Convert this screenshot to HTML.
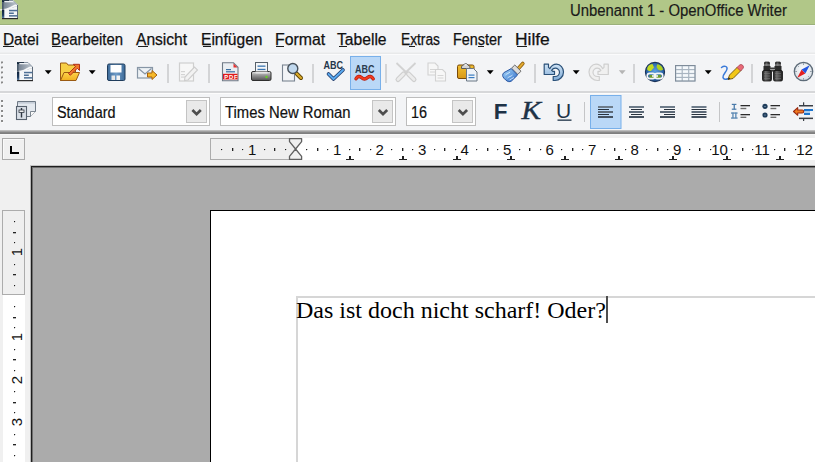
<!DOCTYPE html><html><head><meta charset="utf-8"><style>
*{margin:0;padding:0;box-sizing:border-box}
html,body{width:815px;height:462px;overflow:hidden;background:#f0f0f0;font-family:"Liberation Sans",sans-serif}
.a{position:absolute}
.mi{position:absolute;top:31px;font-size:16px;line-height:18px;color:#111;-webkit-text-stroke:0.25px #111;white-space:pre;transform:scaleX(0.9);transform-origin:0 0}
.ul{position:absolute;top:47px;height:1px;background:#1b1b1b}
.t{position:absolute;font-size:16px;line-height:20px;color:#111;-webkit-text-stroke:0.2px #111;white-space:pre;transform:scaleX(0.9);transform-origin:0 0}
svg{position:absolute;left:0;top:0}
</style></head><body>
<div class="a" style="left:0px;top:0px;width:815px;height:24px;background:#b1c788;"></div>
<div class="a" style="left:0px;top:24px;width:815px;height:1px;background:#9bb07c;"></div>
<div class="a" style="left:0px;top:25px;width:815px;height:1px;background:#fcfcfd;"></div>
<div class="a" style="left:0px;top:26px;width:815px;height:26px;background:#f3f4f6;"></div>
<div class="a" style="left:0px;top:52px;width:815px;height:1px;background:#eeeff0;"></div>
<div class="a" style="left:0px;top:53px;width:815px;height:1px;background:#e8e9ea;"></div>
<div class="a" style="left:0px;top:54px;width:815px;height:1px;background:#fbfbfc;"></div>
<div class="a" style="left:0px;top:55px;width:815px;height:36px;background:#f3f4f6;"></div>
<div class="a" style="left:0px;top:91px;width:815px;height:2px;background:#d6d7d9;"></div>
<div class="a" style="left:0px;top:93px;width:815px;height:1px;background:#fcfcfc;"></div>
<div class="a" style="left:0px;top:94px;width:815px;height:36px;background:#f3f4f6;"></div>
<div class="a" style="left:0px;top:130px;width:815px;height:1px;background:#bdbdbd;"></div>
<div class="a" style="left:0px;top:131px;width:815px;height:1px;background:#a0a0a0;"></div>
<div class="a" style="left:0px;top:132px;width:815px;height:1px;background:#868686;"></div>
<div class="a" style="left:0px;top:133px;width:815px;height:1px;background:#7e7e7e;"></div>
<div class="a" style="left:0px;top:134px;width:815px;height:1px;background:#f7f7f7;"></div>
<div class="a" style="left:0px;top:135px;width:815px;height:31px;background:#f0f0f0;"></div>
<div class="a" style="left:570px;top:2px;font-size:16px;line-height:18px;color:#1a1a1a;-webkit-text-stroke:0.2px #1a1a1a;white-space:pre;transform:scaleX(0.93);transform-origin:0 0">Unbenannt 1 - OpenOffice Writer</div>
<div class="mi" style="left:2.63px;transform:scaleX(0.9610)">Datei</div>
<div class="mi" style="left:51.27px;transform:scaleX(0.9296)">Bearbeiten</div>
<div class="mi" style="left:136.32px;transform:scaleX(0.9743)">Ansicht</div>
<div class="mi" style="left:201.22px;transform:scaleX(0.9733)">Einfügen</div>
<div class="mi" style="left:275.30px;transform:scaleX(0.9900)">Format</div>
<div class="mi" style="left:337.41px;transform:scaleX(0.9777)">Tabelle</div>
<div class="mi" style="left:401.14px;transform:scaleX(0.8597)">Extras</div>
<div class="mi" style="left:453.10px;transform:scaleX(0.8981)">Fenster</div>
<div class="mi" style="left:514.99px;transform:scaleX(1.0869)">Hilfe</div>
<div class="a" style="left:3px;top:46px;width:11px;height:1px;background:#1b1b1b;"></div>
<div class="a" style="left:52px;top:46px;width:9px;height:1px;background:#1b1b1b;"></div>
<div class="a" style="left:138px;top:46px;width:10px;height:1px;background:#1b1b1b;"></div>
<div class="a" style="left:203px;top:46px;width:8px;height:1px;background:#1b1b1b;"></div>
<div class="a" style="left:276px;top:46px;width:8px;height:1px;background:#1b1b1b;"></div>
<div class="a" style="left:339px;top:46px;width:8px;height:1px;background:#1b1b1b;"></div>
<div class="a" style="left:409px;top:46px;width:6px;height:1px;background:#1b1b1b;"></div>
<div class="a" style="left:478px;top:46px;width:6px;height:1px;background:#1b1b1b;"></div>
<div class="a" style="left:517px;top:46px;width:10px;height:1px;background:#1b1b1b;"></div>
<div class="a" style="left:2px;top:138px;width:23px;height:22px;background:#f0f0f0;border:1px solid #ababab;box-shadow:inset 1px 1px 0 #fafafa"></div>
<div class="a" style="left:10px;top:146px;width:2px;height:8px;background:#000;"></div>
<div class="a" style="left:10px;top:152px;width:9px;height:2px;background:#000;"></div>
<div class="a" style="left:210px;top:138px;width:86px;height:22px;background:#efefef;border:1px solid #acacac;border-right:none"></div>
<div class="a" style="left:296px;top:138px;width:519px;height:22px;background:#ffffff;"></div>
<div class="a" style="left:31px;top:166px;width:784px;height:296px;background:#ababab;"></div>
<div class="a" style="left:30px;top:165px;width:785px;height:1px;background:#c4c4c4;"></div>
<div class="a" style="left:30px;top:166px;width:1px;height:296px;background:#b8b8b8;"></div>
<div class="a" style="left:31px;top:166px;width:784px;height:1px;background:#1e1e1e;"></div>
<div class="a" style="left:31px;top:166px;width:1px;height:296px;background:#1e1e1e;"></div>
<div class="a" style="left:32px;top:167px;width:783px;height:1px;background:#6e6e6e;"></div>
<div class="a" style="left:32px;top:167px;width:1px;height:295px;background:#6e6e6e;"></div>
<div class="a" style="left:210px;top:210px;width:605px;height:252px;background:#ffffff;border-top:1px solid #000;border-left:1px solid #000"></div>
<div class="a" style="left:296px;top:296px;width:519px;height:2px;background:#d6d6d6;"></div>
<div class="a" style="left:296px;top:296px;width:2px;height:166px;background:#d6d6d6;"></div>
<div class="a" style="left:2px;top:210px;width:23px;height:85px;background:#efefef;border:1px solid #acacac"></div>
<div class="a" style="left:3px;top:295px;width:22px;height:167px;background:#ffffff;"></div>
<div class="a" style="left:221px;top:149px;width:1px;height:1px;background:#1a1a1a;box-shadow:1px 0 0 #c8c8c8,0 1px 0 #d8d8d8"></div>
<div class="a" style="left:232px;top:148px;width:1px;height:3px;background:#222;box-shadow:1px 0 0 #b0b0b0"></div>
<div class="a" style="left:242px;top:149px;width:1px;height:1px;background:#1a1a1a;box-shadow:1px 0 0 #c8c8c8,0 1px 0 #d8d8d8"></div>
<div class="a" style="left:232.10px;top:141px;width:40px;text-align:center;font-size:15px;line-height:18px;color:#111">1</div>
<div class="a" style="left:264px;top:149px;width:1px;height:1px;background:#1a1a1a;box-shadow:1px 0 0 #c8c8c8,0 1px 0 #d8d8d8"></div>
<div class="a" style="left:274px;top:148px;width:1px;height:3px;background:#222;box-shadow:1px 0 0 #b0b0b0"></div>
<div class="a" style="left:285px;top:149px;width:1px;height:1px;background:#1a1a1a;box-shadow:1px 0 0 #c8c8c8,0 1px 0 #d8d8d8"></div>
<div class="a" style="left:306px;top:149px;width:1px;height:1px;background:#1a1a1a;box-shadow:1px 0 0 #c8c8c8,0 1px 0 #d8d8d8"></div>
<div class="a" style="left:317px;top:148px;width:1px;height:3px;background:#222;box-shadow:1px 0 0 #b0b0b0"></div>
<div class="a" style="left:327px;top:149px;width:1px;height:1px;background:#1a1a1a;box-shadow:1px 0 0 #c8c8c8,0 1px 0 #d8d8d8"></div>
<div class="a" style="left:317.10px;top:141px;width:40px;text-align:center;font-size:15px;line-height:18px;color:#111">1</div>
<div class="a" style="left:349px;top:149px;width:1px;height:1px;background:#1a1a1a;box-shadow:1px 0 0 #c8c8c8,0 1px 0 #d8d8d8"></div>
<div class="a" style="left:359px;top:148px;width:1px;height:3px;background:#222;box-shadow:1px 0 0 #b0b0b0"></div>
<div class="a" style="left:370px;top:149px;width:1px;height:1px;background:#1a1a1a;box-shadow:1px 0 0 #c8c8c8,0 1px 0 #d8d8d8"></div>
<div class="a" style="left:359.60px;top:141px;width:40px;text-align:center;font-size:15px;line-height:18px;color:#111">2</div>
<div class="a" style="left:391px;top:149px;width:1px;height:1px;background:#1a1a1a;box-shadow:1px 0 0 #c8c8c8,0 1px 0 #d8d8d8"></div>
<div class="a" style="left:402px;top:148px;width:1px;height:3px;background:#222;box-shadow:1px 0 0 #b0b0b0"></div>
<div class="a" style="left:412px;top:149px;width:1px;height:1px;background:#1a1a1a;box-shadow:1px 0 0 #c8c8c8,0 1px 0 #d8d8d8"></div>
<div class="a" style="left:402.10px;top:141px;width:40px;text-align:center;font-size:15px;line-height:18px;color:#111">3</div>
<div class="a" style="left:434px;top:149px;width:1px;height:1px;background:#1a1a1a;box-shadow:1px 0 0 #c8c8c8,0 1px 0 #d8d8d8"></div>
<div class="a" style="left:444px;top:148px;width:1px;height:3px;background:#222;box-shadow:1px 0 0 #b0b0b0"></div>
<div class="a" style="left:455px;top:149px;width:1px;height:1px;background:#1a1a1a;box-shadow:1px 0 0 #c8c8c8,0 1px 0 #d8d8d8"></div>
<div class="a" style="left:444.60px;top:141px;width:40px;text-align:center;font-size:15px;line-height:18px;color:#111">4</div>
<div class="a" style="left:476px;top:149px;width:1px;height:1px;background:#1a1a1a;box-shadow:1px 0 0 #c8c8c8,0 1px 0 #d8d8d8"></div>
<div class="a" style="left:487px;top:148px;width:1px;height:3px;background:#222;box-shadow:1px 0 0 #b0b0b0"></div>
<div class="a" style="left:497px;top:149px;width:1px;height:1px;background:#1a1a1a;box-shadow:1px 0 0 #c8c8c8,0 1px 0 #d8d8d8"></div>
<div class="a" style="left:487.10px;top:141px;width:40px;text-align:center;font-size:15px;line-height:18px;color:#111">5</div>
<div class="a" style="left:519px;top:149px;width:1px;height:1px;background:#1a1a1a;box-shadow:1px 0 0 #c8c8c8,0 1px 0 #d8d8d8"></div>
<div class="a" style="left:529px;top:148px;width:1px;height:3px;background:#222;box-shadow:1px 0 0 #b0b0b0"></div>
<div class="a" style="left:540px;top:149px;width:1px;height:1px;background:#1a1a1a;box-shadow:1px 0 0 #c8c8c8,0 1px 0 #d8d8d8"></div>
<div class="a" style="left:529.60px;top:141px;width:40px;text-align:center;font-size:15px;line-height:18px;color:#111">6</div>
<div class="a" style="left:561px;top:149px;width:1px;height:1px;background:#1a1a1a;box-shadow:1px 0 0 #c8c8c8,0 1px 0 #d8d8d8"></div>
<div class="a" style="left:572px;top:148px;width:1px;height:3px;background:#222;box-shadow:1px 0 0 #b0b0b0"></div>
<div class="a" style="left:582px;top:149px;width:1px;height:1px;background:#1a1a1a;box-shadow:1px 0 0 #c8c8c8,0 1px 0 #d8d8d8"></div>
<div class="a" style="left:572.10px;top:141px;width:40px;text-align:center;font-size:15px;line-height:18px;color:#111">7</div>
<div class="a" style="left:604px;top:149px;width:1px;height:1px;background:#1a1a1a;box-shadow:1px 0 0 #c8c8c8,0 1px 0 #d8d8d8"></div>
<div class="a" style="left:614px;top:148px;width:1px;height:3px;background:#222;box-shadow:1px 0 0 #b0b0b0"></div>
<div class="a" style="left:625px;top:149px;width:1px;height:1px;background:#1a1a1a;box-shadow:1px 0 0 #c8c8c8,0 1px 0 #d8d8d8"></div>
<div class="a" style="left:614.60px;top:141px;width:40px;text-align:center;font-size:15px;line-height:18px;color:#111">8</div>
<div class="a" style="left:646px;top:149px;width:1px;height:1px;background:#1a1a1a;box-shadow:1px 0 0 #c8c8c8,0 1px 0 #d8d8d8"></div>
<div class="a" style="left:657px;top:148px;width:1px;height:3px;background:#222;box-shadow:1px 0 0 #b0b0b0"></div>
<div class="a" style="left:667px;top:149px;width:1px;height:1px;background:#1a1a1a;box-shadow:1px 0 0 #c8c8c8,0 1px 0 #d8d8d8"></div>
<div class="a" style="left:657.10px;top:141px;width:40px;text-align:center;font-size:15px;line-height:18px;color:#111">9</div>
<div class="a" style="left:689px;top:149px;width:1px;height:1px;background:#1a1a1a;box-shadow:1px 0 0 #c8c8c8,0 1px 0 #d8d8d8"></div>
<div class="a" style="left:699px;top:148px;width:1px;height:3px;background:#222;box-shadow:1px 0 0 #b0b0b0"></div>
<div class="a" style="left:710px;top:149px;width:1px;height:1px;background:#1a1a1a;box-shadow:1px 0 0 #c8c8c8,0 1px 0 #d8d8d8"></div>
<div class="a" style="left:699.60px;top:141px;width:40px;text-align:center;font-size:15px;line-height:18px;color:#111">10</div>
<div class="a" style="left:731px;top:149px;width:1px;height:1px;background:#1a1a1a;box-shadow:1px 0 0 #c8c8c8,0 1px 0 #d8d8d8"></div>
<div class="a" style="left:742px;top:148px;width:1px;height:3px;background:#222;box-shadow:1px 0 0 #b0b0b0"></div>
<div class="a" style="left:752px;top:149px;width:1px;height:1px;background:#1a1a1a;box-shadow:1px 0 0 #c8c8c8,0 1px 0 #d8d8d8"></div>
<div class="a" style="left:742.10px;top:141px;width:40px;text-align:center;font-size:15px;line-height:18px;color:#111">11</div>
<div class="a" style="left:774px;top:149px;width:1px;height:1px;background:#1a1a1a;box-shadow:1px 0 0 #c8c8c8,0 1px 0 #d8d8d8"></div>
<div class="a" style="left:784px;top:148px;width:1px;height:3px;background:#222;box-shadow:1px 0 0 #b0b0b0"></div>
<div class="a" style="left:795px;top:149px;width:1px;height:1px;background:#1a1a1a;box-shadow:1px 0 0 #c8c8c8,0 1px 0 #d8d8d8"></div>
<div class="a" style="left:784.60px;top:141px;width:40px;text-align:center;font-size:15px;line-height:18px;color:#111">12</div>
<div class="a" style="left:349px;top:156px;width:2px;height:4px;background:#222;"></div>
<div class="a" style="left:346px;top:159px;width:8px;height:1px;background:#222;"></div>
<div class="a" style="left:402px;top:156px;width:2px;height:4px;background:#222;"></div>
<div class="a" style="left:399px;top:159px;width:8px;height:1px;background:#222;"></div>
<div class="a" style="left:456px;top:156px;width:2px;height:4px;background:#222;"></div>
<div class="a" style="left:453px;top:159px;width:8px;height:1px;background:#222;"></div>
<div class="a" style="left:510px;top:156px;width:2px;height:4px;background:#222;"></div>
<div class="a" style="left:507px;top:159px;width:8px;height:1px;background:#222;"></div>
<div class="a" style="left:564px;top:156px;width:2px;height:4px;background:#222;"></div>
<div class="a" style="left:561px;top:159px;width:8px;height:1px;background:#222;"></div>
<div class="a" style="left:618px;top:156px;width:2px;height:4px;background:#222;"></div>
<div class="a" style="left:615px;top:159px;width:8px;height:1px;background:#222;"></div>
<div class="a" style="left:672px;top:156px;width:2px;height:4px;background:#222;"></div>
<div class="a" style="left:669px;top:159px;width:8px;height:1px;background:#222;"></div>
<div class="a" style="left:726px;top:156px;width:2px;height:4px;background:#222;"></div>
<div class="a" style="left:723px;top:159px;width:8px;height:1px;background:#222;"></div>
<div class="a" style="left:779px;top:156px;width:2px;height:4px;background:#222;"></div>
<div class="a" style="left:776px;top:159px;width:8px;height:1px;background:#222;"></div>
<div class="a" style="left:14px;top:221px;width:1px;height:1px;background:#1a1a1a;box-shadow:0 1px 0 #c8c8c8,1px 0 0 #d8d8d8"></div>
<div class="a" style="left:13px;top:232px;width:3px;height:1px;background:#222;box-shadow:0 1px 0 #b0b0b0"></div>
<div class="a" style="left:14px;top:242px;width:1px;height:1px;background:#1a1a1a;box-shadow:0 1px 0 #c8c8c8,1px 0 0 #d8d8d8"></div>
<div class="a" style="left:-3px;top:243.10px;width:40px;height:18px;text-align:center;font-size:15px;line-height:18px;color:#111;transform:rotate(-90deg)">1</div>
<div class="a" style="left:14px;top:264px;width:1px;height:1px;background:#1a1a1a;box-shadow:0 1px 0 #c8c8c8,1px 0 0 #d8d8d8"></div>
<div class="a" style="left:13px;top:274px;width:3px;height:1px;background:#222;box-shadow:0 1px 0 #b0b0b0"></div>
<div class="a" style="left:14px;top:285px;width:1px;height:1px;background:#1a1a1a;box-shadow:0 1px 0 #c8c8c8,1px 0 0 #d8d8d8"></div>
<div class="a" style="left:14px;top:306px;width:1px;height:1px;background:#1a1a1a;box-shadow:0 1px 0 #c8c8c8,1px 0 0 #d8d8d8"></div>
<div class="a" style="left:13px;top:317px;width:3px;height:1px;background:#222;box-shadow:0 1px 0 #b0b0b0"></div>
<div class="a" style="left:14px;top:327px;width:1px;height:1px;background:#1a1a1a;box-shadow:0 1px 0 #c8c8c8,1px 0 0 #d8d8d8"></div>
<div class="a" style="left:-3px;top:328.10px;width:40px;height:18px;text-align:center;font-size:15px;line-height:18px;color:#111;transform:rotate(-90deg)">1</div>
<div class="a" style="left:14px;top:349px;width:1px;height:1px;background:#1a1a1a;box-shadow:0 1px 0 #c8c8c8,1px 0 0 #d8d8d8"></div>
<div class="a" style="left:13px;top:359px;width:3px;height:1px;background:#222;box-shadow:0 1px 0 #b0b0b0"></div>
<div class="a" style="left:14px;top:370px;width:1px;height:1px;background:#1a1a1a;box-shadow:0 1px 0 #c8c8c8,1px 0 0 #d8d8d8"></div>
<div class="a" style="left:-3px;top:370.60px;width:40px;height:18px;text-align:center;font-size:15px;line-height:18px;color:#111;transform:rotate(-90deg)">2</div>
<div class="a" style="left:14px;top:391px;width:1px;height:1px;background:#1a1a1a;box-shadow:0 1px 0 #c8c8c8,1px 0 0 #d8d8d8"></div>
<div class="a" style="left:13px;top:402px;width:3px;height:1px;background:#222;box-shadow:0 1px 0 #b0b0b0"></div>
<div class="a" style="left:14px;top:412px;width:1px;height:1px;background:#1a1a1a;box-shadow:0 1px 0 #c8c8c8,1px 0 0 #d8d8d8"></div>
<div class="a" style="left:-3px;top:413.10px;width:40px;height:18px;text-align:center;font-size:15px;line-height:18px;color:#111;transform:rotate(-90deg)">3</div>
<div class="a" style="left:14px;top:434px;width:1px;height:1px;background:#1a1a1a;box-shadow:0 1px 0 #c8c8c8,1px 0 0 #d8d8d8"></div>
<div class="a" style="left:13px;top:444px;width:3px;height:1px;background:#222;box-shadow:0 1px 0 #b0b0b0"></div>
<div class="a" style="left:14px;top:455px;width:1px;height:1px;background:#1a1a1a;box-shadow:0 1px 0 #c8c8c8,1px 0 0 #d8d8d8"></div>
<div class="a" style="left:296px;top:297px;font-family:'Liberation Serif',serif;font-size:24px;line-height:26px;color:#000;white-space:pre">Das ist doch nicht scharf! Oder?</div>
<div class="a" style="left:606px;top:296px;width:2px;height:27px;background:#4e4e4e;"></div>
<div class="a" style="left:52px;top:97px;width:158px;height:29px;background:#ffffff;border:1px solid #bdbdbd"></div>
<div class="a" style="left:186px;top:100px;width:21px;height:23px;background:#e9e9e9;border:1px solid #c4c4c4"></div>
<div class="t" style="left:57px;top:103px">Standard</div>
<div class="a" style="left:220px;top:97px;width:176px;height:29px;background:#ffffff;border:1px solid #bdbdbd"></div>
<div class="a" style="left:372px;top:100px;width:21px;height:23px;background:#e9e9e9;border:1px solid #c4c4c4"></div>
<div class="t" style="left:225px;top:103px"><span style="display:inline-block;transform:scaleX(1.03);transform-origin:0 0">Times New Roman</span></div>
<div class="a" style="left:406px;top:97px;width:70px;height:29px;background:#ffffff;border:1px solid #bdbdbd"></div>
<div class="a" style="left:452px;top:100px;width:21px;height:23px;background:#e9e9e9;border:1px solid #c4c4c4"></div>
<div class="t" style="left:411px;top:103px">16</div>
<svg width="815" height="462" viewBox="0 0 815 462">
<defs>
<linearGradient id="gpage" x1="0" y1="0" x2="1" y2="1"><stop offset="0" stop-color="#ffffff"/><stop offset="1" stop-color="#dfe4ea"/></linearGradient>
<linearGradient id="gfold" x1="0" y1="0" x2="0" y2="1"><stop offset="0" stop-color="#ffd24a"/><stop offset="1" stop-color="#f0b020"/></linearGradient>
<linearGradient id="gsave" x1="0" y1="0" x2="1" y2="0"><stop offset="0" stop-color="#3c6a98"/><stop offset="0.5" stop-color="#6f9cc8"/><stop offset="1" stop-color="#3c6a98"/></linearGradient>
<linearGradient id="gprint" x1="0" y1="0" x2="0" y2="1"><stop offset="0" stop-color="#e8e8e8"/><stop offset="0.35" stop-color="#a0a0a0"/><stop offset="1" stop-color="#505050"/></linearGradient>
<linearGradient id="gblue" x1="0" y1="0" x2="0" y2="1"><stop offset="0" stop-color="#cfe3f5"/><stop offset="1" stop-color="#7eaad6"/></linearGradient>
<radialGradient id="gglobe" cx="0.4" cy="0.35" r="0.7"><stop offset="0" stop-color="#7fc0ff"/><stop offset="1" stop-color="#1c4e8c"/></radialGradient>
<linearGradient id="gbin" x1="0" y1="0" x2="0" y2="1"><stop offset="0" stop-color="#606060"/><stop offset="1" stop-color="#1a1a1a"/></linearGradient>
<g id="writer">
 <linearGradient id="gwtop" x1="0" y1="0" x2="1" y2="0"><stop offset="0" stop-color="#6f7c8c"/><stop offset="1" stop-color="#c4ccd4"/></linearGradient>
 <linearGradient id="gwleft" x1="0" y1="0" x2="0" y2="1"><stop offset="0" stop-color="#0e2038"/><stop offset="0.6" stop-color="#1e3c60"/><stop offset="1" stop-color="#6a90b8"/></linearGradient>
 <path d="M0 0 H11 L16 5 V19 H0 Z" fill="#f4f6f8"/>
 <path d="M0 2.2 H12.6 L16 5.6 V6.2 C12.5 6.5 9.5 8 6.5 9.3 C4 10 2 9.8 0 9.8 Z" fill="url(#gwtop)"/>
 <path d="M1 0.8 H11" stroke="#e8ecf0" stroke-width="1.4"/>
 <path d="M-3 9.3 C2 9 6 8.6 9.5 6.3 C11.5 5 13.5 4.6 16 4.6 V5.9 C13.5 6 11.5 6.8 9.5 8.2 C6 10.4 2 10.5 -3 10.6 Z" fill="#ffffff" opacity="0.9"/>
 <rect x="0" y="9.5" width="2.3" height="9.5" fill="url(#gwleft)"/>
 <rect x="0" y="0" width="2.3" height="2.5" fill="#14283f"/>
 <rect x="0" y="2.5" width="1.6" height="7" fill="#4a5a6c"/>
 <path d="M0.5 0.5 H7" stroke="#2a3a4c" stroke-width="1"/>
 <path d="M7 0.5 H11 L15.5 5" fill="none" stroke="#8a96a4" stroke-width="1"/>
 <path d="M15.5 5 V18.5" stroke="#5e6a78" stroke-width="1"/>
 <rect x="7" y="9.8" width="8.5" height="1.5" fill="#4e6f94"/>
 <rect x="7" y="12.5" width="4.8" height="1.5" fill="#4e6f94"/>
 <rect x="7" y="15.1" width="8.5" height="1.5" fill="#4e6f94"/>
 <rect x="0" y="18" width="16" height="1.2" fill="#2a2a2a"/>
</g>
</defs>
<use href="#writer" transform="translate(2,0)"/>
<use href="#writer" transform="translate(17,62)"/>
<path d="M44.8 70.2 h6.8 l-3.4 4.1 z" fill="#000"/>
<path d="M88.8 70.2 h6.8 l-3.4 4.1 z" fill="#000"/>
<path d="M486.8 70.2 h6.8 l-3.4 4.1 z" fill="#000"/>
<path d="M572.8 70.2 h6.8 l-3.4 4.1 z" fill="#000"/>
<path d="M704.8 70.2 h6.8 l-3.4 4.1 z" fill="#000"/>
<path d="M618.8 70.2 h6.8 l-3.4 4.1 z" fill="#b5b5b5"/>
<rect x="167" y="64" width="2" height="19" fill="#d3d4d6"/>
<rect x="208" y="64" width="2" height="19" fill="#d3d4d6"/>
<rect x="312" y="64" width="2" height="19" fill="#d3d4d6"/>
<rect x="385" y="64" width="2" height="19" fill="#d3d4d6"/>
<rect x="534" y="64" width="2" height="19" fill="#d3d4d6"/>
<rect x="633" y="64" width="2" height="19" fill="#d3d4d6"/>
<rect x="751" y="64" width="2" height="19" fill="#d3d4d6"/>
<rect x="584" y="102" width="1" height="20" fill="#c4c5c7"/>
<rect x="719" y="102" width="1" height="20" fill="#c4c5c7"/>
<rect x="1" y="61.5" width="2" height="2" fill="#8a8a8a"/><rect x="2" y="63.5" width="1.5" height="0.8" fill="#ffffff"/>
<rect x="1" y="66.5" width="2" height="2" fill="#8a8a8a"/><rect x="2" y="68.5" width="1.5" height="0.8" fill="#ffffff"/>
<rect x="1" y="71.5" width="2" height="2" fill="#8a8a8a"/><rect x="2" y="73.5" width="1.5" height="0.8" fill="#ffffff"/>
<rect x="1" y="76.5" width="2" height="2" fill="#8a8a8a"/><rect x="2" y="78.5" width="1.5" height="0.8" fill="#ffffff"/>
<rect x="1" y="81.5" width="2" height="2" fill="#8a8a8a"/><rect x="2" y="83.5" width="1.5" height="0.8" fill="#ffffff"/>
<rect x="1" y="100" width="2" height="2" fill="#8a8a8a"/><rect x="2" y="102" width="1.5" height="0.8" fill="#ffffff"/>
<rect x="1" y="105" width="2" height="2" fill="#8a8a8a"/><rect x="2" y="107" width="1.5" height="0.8" fill="#ffffff"/>
<rect x="1" y="110" width="2" height="2" fill="#8a8a8a"/><rect x="2" y="112" width="1.5" height="0.8" fill="#ffffff"/>
<rect x="1" y="115" width="2" height="2" fill="#8a8a8a"/><rect x="2" y="117" width="1.5" height="0.8" fill="#ffffff"/>
<rect x="1" y="120" width="2" height="2" fill="#8a8a8a"/><rect x="2" y="122" width="1.5" height="0.8" fill="#ffffff"/>
<g>
<path d="M60.5 63 h6 l1.5 2 h7.5 v15.5 h-15 z" fill="#f7cf45" stroke="#9a5a12" stroke-width="1"/>
<path d="M64 72.5 h15.5 l-3.5 8 h-15.5 z" fill="url(#gfold)" stroke="#9a5a12" stroke-width="1"/>
<path d="M68.5 73.5 l7 -7 l-2.2 -2.2 h6.2 v6.2 l-2.2 -2.2 l-7 7 z" fill="#f0782a" stroke="#b0301a" stroke-width="1" stroke-linejoin="round"/>
</g>
<g>
<rect x="107.5" y="64" width="17.5" height="16.5" rx="1.5" fill="url(#gsave)" stroke="#1f3c5c" stroke-width="1"/>
<rect x="110.5" y="65" width="11" height="7.5" fill="#ffffff"/>
<rect x="111.5" y="75.5" width="3.5" height="4.5" fill="#e8e8e8"/>
<rect x="116.5" y="75.5" width="3.5" height="4.5" fill="#f4f4f4"/>
</g>
<g>
<rect x="137.5" y="67.5" width="15" height="10.5" fill="#eef2f6" stroke="#8796a6" stroke-width="1.2"/>
<path d="M138.5 68.5 L145 74 L151.5 68.5" fill="none" stroke="#8796a6" stroke-width="1.2"/>
<path d="M147.5 73 h4.5 v-2.5 l5 4.5 l-5 4.5 v-2.5 h-4.5 z" fill="#f7b928" stroke="#a5600e" stroke-width="1"/>
</g>
<g opacity="1">
<rect x="179.5" y="63" width="14" height="18" fill="#f7f7f7" stroke="#cfcfcf" stroke-width="1.2"/>
<rect x="181" y="71" width="4" height="1.2" fill="#d4d4d4"/><rect x="181" y="74" width="4" height="1.2" fill="#d4d4d4"/><rect x="181" y="76.5" width="4" height="1.2" fill="#d4d4d4"/>
<path d="M185 77 l9.5 -10 l3 3 l-9.5 10 l-3.5 0.5 z" fill="#f2f2f2" stroke="#cdcdcd" stroke-width="1.1"/>
</g>
<g>
<path d="M222.5 62.8 h11 l4.5 4.5 v13.5 h-15.5 z" fill="#eaeef2" stroke="#6f7a86" stroke-width="1.1"/>
<path d="M233.5 63.5 l4 4 h-4 z" fill="#e83030"/>
<rect x="226" y="69" width="5" height="1.2" fill="#3b6ea0"/>
<rect x="226" y="71.2" width="9" height="1.2" fill="#3b6ea0"/>
<rect x="223" y="73.8" width="14.5" height="5.6" fill="#e01818"/>
<text x="224.2" y="78.6" font-family="Liberation Sans" font-weight="bold" font-size="5.8" fill="#fff" letter-spacing="0.9">PDF</text>
</g>
<g>
<rect x="255.5" y="62.5" width="12" height="11" fill="#f4f6f8" stroke="#56606a" stroke-width="1"/>
<rect x="257.5" y="65.5" width="8" height="1.3" fill="#3a74b0"/>
<rect x="257.5" y="68.8" width="8" height="1.3" fill="#3a74b0"/>
<rect x="251.5" y="71.5" width="19.5" height="9" rx="1.5" fill="url(#gprint)" stroke="#2e2e2e" stroke-width="1"/>
<rect x="255.5" y="71.5" width="12" height="2" fill="#e4e4e4"/>
<circle cx="266.5" cy="77" r="1.2" fill="#64d020"/>
</g>
<g>
<rect x="282.5" y="65" width="12" height="16" fill="#f2f4f7" stroke="#7a8592" stroke-width="1.1"/>
<path d="M296.5 73.5 l4.5 4.5" stroke="#5a4000" stroke-width="4" stroke-linecap="round"/>
<path d="M296.5 73.5 l4.5 4.5" stroke="#d8a828" stroke-width="2.4" stroke-linecap="round"/>
<circle cx="292.8" cy="68.5" r="5" fill="#c0d8ee" stroke="#46505a" stroke-width="1.4"/>
</g>
<g>
<text x="323.5" y="69.4" font-family="Liberation Sans" font-weight="bold" font-size="10.2" fill="#24364a" textLength="19.5" lengthAdjust="spacingAndGlyphs">ABC</text>
<path d="M328.5 74 l5 5 l9.5 -9" fill="none" stroke="#1e3a6a" stroke-width="3.6" stroke-linejoin="round" stroke-linecap="round"/>
<path d="M328.5 74 l5 5 l9.5 -9" fill="none" stroke="#5aaaf0" stroke-width="2" stroke-linejoin="round" stroke-linecap="round"/>
</g>
<g>
<rect x="350.5" y="56.5" width="30" height="33" fill="#bad8f7" stroke="#78b0ea" stroke-width="1"/>
<text x="355" y="72.6" font-family="Liberation Sans" font-weight="bold" font-size="10" fill="#2a3c50" textLength="19.5" lengthAdjust="spacingAndGlyphs">ABC</text>
<path d="M356 78.8 C357.5 76 359.5 76 361.5 77.5 C363.5 79.5 365.5 79.5 367.5 77.5 C369.5 76 371.5 76 373.2 78.8" fill="none" stroke="#b81808" stroke-width="3.4" stroke-linecap="round"/><path d="M356 78.8 C357.5 76 359.5 76 361.5 77.5 C363.5 79.5 365.5 79.5 367.5 77.5 C369.5 76 371.5 76 373.2 78.8" fill="none" stroke="#f03a20" stroke-width="2" stroke-linecap="round"/>
</g>
<g>
<path d="M396.5 63 L409.5 75.5" stroke="#d2d2d2" stroke-width="1.8"/>
<path d="M415.5 63 L402.5 75.5" stroke="#d2d2d2" stroke-width="1.8"/>
<path d="M403.5 74 L398 79.5" stroke="#cfcfcf" stroke-width="5" stroke-linecap="round"/>
<path d="M403.5 74 L398 79.5" stroke="#ececec" stroke-width="2.6" stroke-linecap="round"/>
<path d="M408.5 74 L414 79.5" stroke="#cfcfcf" stroke-width="5" stroke-linecap="round"/>
<path d="M408.5 74 L414 79.5" stroke="#ececec" stroke-width="2.6" stroke-linecap="round"/>
</g>
<g>
<path d="M428 63 h7 l3 3 v9 h-10 z" fill="#f7f7f7" stroke="#d2d2d2" stroke-width="1.1"/>
<rect x="430" y="69" width="5" height="1" fill="#d6d6d6"/><rect x="430" y="71.5" width="5" height="1" fill="#d6d6d6"/>
<path d="M435.5 69.5 h7 l3 3 v8.5 h-10 z" fill="#f7f7f7" stroke="#d2d2d2" stroke-width="1.1"/>
<rect x="437.5" y="75" width="6" height="1" fill="#d6d6d6"/><rect x="437.5" y="77.5" width="6" height="1" fill="#d6d6d6"/>
</g>
<g>
<linearGradient id="gclip" x1="0" y1="0" x2="0" y2="1"><stop offset="0" stop-color="#f2c030"/><stop offset="1" stop-color="#d89818"/></linearGradient><rect x="457.5" y="65" width="16.5" height="13.5" rx="1.5" fill="url(#gclip)" stroke="#7a4a08" stroke-width="1"/>
<path d="M461.5 68.5 v-2.2 l2 -1.2 a2.4 2.4 0 0 1 4.4 0 l2 1.2 v2.2 z" fill="#d4d4d4" stroke="#5a5a5a" stroke-width="1"/><rect x="464.6" y="64.2" width="2.2" height="1.2" fill="#f4f4f4"/>
<path d="M466.5 68.5 h7 l3.5 3.5 v9 h-10.5 z" fill="#eef3f8" stroke="#6a7684" stroke-width="1"/>
<rect x="468.5" y="74.5" width="6" height="1.2" fill="#3a7cc0"/><rect x="468.5" y="77" width="6" height="1.2" fill="#3a7cc0"/>
</g>
<g>
<linearGradient id="gbrush" x1="0" y1="0" x2="1" y2="1"><stop offset="0" stop-color="#a6d8fa"/><stop offset="1" stop-color="#2f6cc8"/></linearGradient>
<path d="M517 70 L522.8 63.5" stroke="#8a5c0a" stroke-width="3.6" stroke-linecap="round"/>
<path d="M517 70 L522.8 63.5" stroke="#e2aa32" stroke-width="2" stroke-linecap="round"/>
<path d="M511.5 68.2 L514.8 65 L521 71.2 L517.8 74.4 Z" fill="#dcdcdc" stroke="#5a5a5a" stroke-width="0.9"/>
<path d="M511.2 68.6 L517.6 75 L511.5 81 C509.8 82.2 507.5 81.8 505.6 79.9 L503.9 78.2 C502.2 76.4 502.3 74.2 503.8 72.7 Z" fill="url(#gbrush)" stroke="#2a56a2" stroke-width="1"/>
<path d="M505.5 75 C507 73.5 508.5 73.5 510 72 M507.5 78 C509 76.5 511 76.5 512.5 75 M509.5 80 C511 78.8 512.5 78.5 514 77.5" stroke="#e8f6ff" stroke-width="0.8" fill="none"/>
</g>
<path transform="translate(542,62)" d="M2.2 2.2 H6.5 V5.3 L7.8 6.6 C9.5 3.5 12 2.2 14.5 2.2 C18.5 2.2 21.5 5.8 21.5 10 C21.5 14.8 17.5 18.5 13 18.5 H11.2 V14.5 H13 C15.5 14.5 17.5 12.5 17.5 10.2 C17.5 8 15.5 6.2 13.3 6.2 C11.8 6.2 10.5 7 9.6 8.4 L10.7 9.3 H12.5 V12.5 H2.2 Z" fill="url(#gblue)" stroke="#2a5078" stroke-width="1.2" stroke-linejoin="round"/>
<path transform="translate(610.5,62) scale(-1,1)" d="M2.2 2.2 H6.5 V5.3 L7.8 6.6 C9.5 3.5 12 2.2 14.5 2.2 C18.5 2.2 21.5 5.8 21.5 10 C21.5 14.8 17.5 18.5 13 18.5 H11.2 V14.5 H13 C15.5 14.5 17.5 12.5 17.5 10.2 C17.5 8 15.5 6.2 13.3 6.2 C11.8 6.2 10.5 7 9.6 8.4 L10.7 9.3 H12.5 V12.5 H2.2 Z" fill="#f0f0f0" stroke="#cfcfcf" stroke-width="1.2" stroke-linejoin="round"/>
<g>
<radialGradient id="gglobe2" cx="0.5" cy="0.45" r="0.6"><stop offset="0" stop-color="#5aa0e0"/><stop offset="0.7" stop-color="#2a64a8"/><stop offset="1" stop-color="#1a3e70"/></radialGradient>
<circle cx="655" cy="72" r="9.6" fill="url(#gglobe2)" stroke="#1c3458" stroke-width="1.1"/>
<path d="M647.2 69.5 C647 66.5 649.5 64.2 652.5 64 L654 67.5 L651 71 C649.5 71.2 648 70.8 647.2 69.5 Z" fill="#c4dc20"/>
<path d="M657.2 64.2 C660 64.5 662.8 66.8 663 69.8 C661.5 70.8 659.5 70.8 658 69.5 L656.5 67 Z" fill="#b0d020"/>
<path d="M649 75.5 C651 74.5 653 74.5 654.5 75.5 L654 78.5 C652 79.5 650 79 649 75.5 Z M656 75.5 C658 74.5 660 74.5 661.5 75.5 C660.5 78.5 658.5 79.5 656 78.5 Z" fill="#6a9a2a"/>
<rect x="647.2" y="73.4" width="8" height="5.2" rx="2.6" fill="none" stroke="#f4f6f4" stroke-width="1.6"/>
<rect x="654.8" y="73.4" width="8" height="5.2" rx="2.6" fill="none" stroke="#f4f6f4" stroke-width="1.6"/>
<rect x="652" y="75.2" width="6" height="1.6" fill="#f4f6f4"/>
</g>
<g>
<rect x="675" y="65" width="20.5" height="16.5" fill="#a9b5c1"/>
<rect x="676.3" y="66.3" width="5.3" height="2.7" fill="#f6f9fc"/>
<rect x="682.8" y="66.3" width="5.3" height="2.7" fill="#f6f9fc"/>
<rect x="689.3" y="66.3" width="5.3" height="2.7" fill="#f6f9fc"/>
<rect x="676.3" y="70.2" width="5.3" height="2.7" fill="#f6f9fc"/>
<rect x="682.8" y="70.2" width="5.3" height="2.7" fill="#f6f9fc"/>
<rect x="689.3" y="70.2" width="5.3" height="2.7" fill="#f6f9fc"/>
<rect x="676.3" y="74.1" width="5.3" height="2.7" fill="#f6f9fc"/>
<rect x="682.8" y="74.1" width="5.3" height="2.7" fill="#f6f9fc"/>
<rect x="689.3" y="74.1" width="5.3" height="2.7" fill="#f6f9fc"/>
<rect x="676.3" y="78.0" width="5.3" height="2.7" fill="#f6f9fc"/>
<rect x="682.8" y="78.0" width="5.3" height="2.7" fill="#f6f9fc"/>
<rect x="689.3" y="78.0" width="5.3" height="2.7" fill="#f6f9fc"/>
<rect x="675.5" y="65.5" width="19.5" height="15.5" fill="none" stroke="#7f8c9a" stroke-width="1"/>
</g>
<g>
<path d="M721.5 67.5 c2.5 -2 6 -1.5 5.5 1.5 c-0.5 3 -4.5 5.5 -4 8.5 c0.5 2 3 2 5 1.2" fill="none" stroke="#3a7ad8" stroke-width="1.5" stroke-linecap="round"/>
<path d="M728 79.5 l1.5 -4.5 l8 -8 l3.5 3.5 l-8 8 z" fill="#f2c818" stroke="#6a5010" stroke-width="0.9" stroke-linejoin="round"/>
<path d="M737 67.5 l2.2 -2.2 c1 -1 2.5 -1 3.5 0 c1 1 1 2.5 0 3.5 l-2.2 2.2 z" fill="#e86a78" stroke="#a84050" stroke-width="0.8"/>
<path d="M728 79.5 l0.8 -2.3 l1.5 1.5 z" fill="#202020"/>
</g>
<g>
<linearGradient id="gbin2" x1="0" y1="0" x2="1" y2="0"><stop offset="0" stop-color="#1c1c1c"/><stop offset="0.35" stop-color="#6a6a6a"/><stop offset="1" stop-color="#1c1c1c"/></linearGradient>
<rect x="764.5" y="62" width="5" height="4.5" rx="0.8" fill="url(#gbin2)" stroke="#151515" stroke-width="0.7"/>
<rect x="775.5" y="62" width="5" height="4.5" rx="0.8" fill="url(#gbin2)" stroke="#151515" stroke-width="0.7"/>
<rect x="764" y="64.5" width="6" height="1" fill="#9a9a9a"/><rect x="775" y="64.5" width="6" height="1" fill="#9a9a9a"/>
<rect x="763.5" y="66" width="7" height="5" fill="#2a2a2a"/><rect x="774.5" y="66" width="7" height="5" fill="#2a2a2a"/>
<rect x="769.5" y="67.5" width="6" height="1.6" fill="#3a3a3a"/><rect x="769.5" y="70" width="6" height="1.6" fill="#3a3a3a"/>
<rect x="770" y="69.1" width="5" height="0.9" fill="#9a9a9a"/>
<rect x="762.5" y="70.5" width="9" height="10.5" rx="1.5" fill="url(#gbin2)" stroke="#111" stroke-width="0.8"/>
<rect x="773.5" y="70.5" width="9" height="10.5" rx="1.5" fill="url(#gbin2)" stroke="#111" stroke-width="0.8"/>
<path d="M764 73.5 h6 M764 76 h6 M764 78.5 h6 M775 73.5 h6 M775 76 h6 M775 78.5 h6" stroke="#808080" stroke-width="0.5"/>
</g>
<g>
<radialGradient id="gnav" cx="0.5" cy="0.4" r="0.6"><stop offset="0" stop-color="#ffffff"/><stop offset="1" stop-color="#d6dde4"/></radialGradient>
<circle cx="803.5" cy="71.5" r="9.2" fill="url(#gnav)" stroke="#5d6b78" stroke-width="1.3"/>
<g stroke="#8a96a2" stroke-width="0.9">
<path d="M803.5 63.2 v1.8 M803.5 78 v1.8 M795.2 71.5 h1.8 M810 71.5 h1.8 M797.6 65.6 l1.2 1.2 M808.2 76.2 l1.2 1.2 M809.4 65.6 l-1.2 1.2 M798.8 76.2 l-1.2 1.2"/>
</g>
<path d="M797.3 77.7 L801.6 69.6 L805.4 73.4 Z" fill="#e42020"/>
<path d="M809.7 65.3 L801.6 69.6 L805.4 73.4 Z" fill="#2456e0"/>
</g>
<g>
<path d="M17.5 101.5 h18 v10 l-5 5 h-13 z" fill="#e4e9ef" stroke="#6f7a86" stroke-width="1"/>
<rect x="18" y="102" width="17" height="1.6" fill="#c4ccd6"/>
<path d="M30.5 116.5 v-5 h5" fill="#fafafa" stroke="#6f7a86" stroke-width="0.9"/>
<rect x="16.5" y="106.5" width="10" height="13" fill="#d9dfe6" stroke="#58626e" stroke-width="1.1"/>
<rect x="20.8" y="108" width="1.4" height="9.5" fill="#2e3640"/>
<rect x="19" y="110" width="5" height="2.4" fill="#eeeeee" stroke="#2e3640" stroke-width="0.8"/>
</g>
<text x="493.8" y="119" font-family="Liberation Sans" font-weight="bold" font-size="22.5" fill="#1d3246">F</text>
<text x="521.5" y="119" font-family="Liberation Serif" font-style="italic" font-size="24.5" fill="#1d3246" stroke="#1d3246" stroke-width="0.4" textLength="19.5" lengthAdjust="spacingAndGlyphs">K</text>
<text x="556" y="118.3" font-family="Liberation Sans" font-size="21" fill="#1d3246">U</text>
<rect x="557.5" y="119.5" width="14" height="1.3" fill="#1d3246"/>
<rect x="590.5" y="95.5" width="30.5" height="33" fill="#bad8f7" stroke="#78b0ea" stroke-width="1"/>
<rect x="598" y="106" width="15" height="2" fill="#6e7c8a"/>
<rect x="598" y="111" width="15" height="2" fill="#5d6a78"/>
<rect x="598" y="116" width="15" height="2" fill="#465260"/>
<rect x="598" y="109" width="11" height="1" fill="#28323e"/>
<rect x="598" y="114" width="11" height="1" fill="#28323e"/>
<rect x="629" y="106" width="15" height="2" fill="#6e7c8a"/>
<rect x="629" y="111" width="15" height="2" fill="#5d6a78"/>
<rect x="629" y="116" width="15" height="2" fill="#465260"/>
<rect x="631" y="109" width="11" height="1" fill="#28323e"/>
<rect x="631" y="114" width="11" height="1" fill="#28323e"/>
<rect x="660" y="106" width="15" height="2" fill="#6e7c8a"/>
<rect x="660" y="111" width="15" height="2" fill="#5d6a78"/>
<rect x="660" y="116" width="15" height="2" fill="#465260"/>
<rect x="664" y="109" width="11" height="1" fill="#28323e"/>
<rect x="664" y="114" width="11" height="1" fill="#28323e"/>
<rect x="691.5" y="106" width="15" height="2" fill="#6e7c8a"/>
<rect x="691.5" y="111" width="15" height="2" fill="#5d6a78"/>
<rect x="691.5" y="116" width="15" height="2" fill="#465260"/>
<rect x="691.5" y="109" width="15" height="1" fill="#28323e"/>
<rect x="691.5" y="114" width="15" height="1" fill="#28323e"/>
<g>
<rect x="731.8" y="103.8" width="4.6" height="1.2" fill="#4a7aaa"/><rect x="733.6" y="104" width="1.3" height="5.4" fill="#4a7aaa"/><rect x="731.8" y="108.6" width="4.6" height="1.2" fill="#4a7aaa"/>
<rect x="731" y="112.4" width="6.6" height="1.3" fill="#5a88b4"/><rect x="732.3" y="112.6" width="1.3" height="5.6" fill="#5a88b4"/><rect x="735.2" y="112.6" width="1.3" height="5.6" fill="#5a88b4"/><rect x="731" y="117.4" width="6.6" height="1.3" fill="#5a88b4"/>
<rect x="740.5" y="105" width="9.5" height="1.3" fill="#2a2a2a"/><rect x="740.5" y="107.8" width="5.8" height="1.4" fill="#6e6e6e"/>
<rect x="740.5" y="114" width="9.5" height="1.3" fill="#2a2a2a"/><rect x="740.5" y="116.6" width="5.8" height="1.4" fill="#6e6e6e"/>
<circle cx="765" cy="106.3" r="2.6" fill="#1f3c5a"/><circle cx="765" cy="115" r="2.6" fill="#1f3c5a"/>
<path d="M764 106 l1 1 l1 -1 z M764 114.7 l1 1 l1 -1 z" fill="#9ab8d4"/>
<rect x="770.5" y="105" width="9.5" height="1.3" fill="#2a2a2a"/><rect x="770.5" y="107.8" width="5.8" height="1.4" fill="#6e6e6e"/>
<rect x="770.5" y="114" width="9.5" height="1.3" fill="#2a2a2a"/><rect x="770.5" y="116.6" width="5.8" height="1.4" fill="#6e6e6e"/>
</g>
<g>
<rect x="799" y="105" width="14" height="1.5" fill="#3a3f46"/>
<rect x="799" y="117.6" width="14" height="1.5" fill="#3a3f46"/>
<rect x="803" y="102.3" width="1.2" height="3.5" fill="#3a3f46"/><rect x="803" y="118" width="1.2" height="3" fill="#3a3f46"/>
<rect x="804" y="109" width="9" height="2" fill="#1c74cc"/>
<rect x="804" y="111" width="6" height="2" fill="#a8cdf0"/>
<rect x="804" y="113" width="6" height="2" fill="#1c74cc"/>
<path d="M793.5 111.5 l4.2 -3.8 v2.3 h4.5 a1.5 1.5 0 0 1 0 3 h-4.5 v2.3 z" fill="#f07a20" stroke="#9a2a10" stroke-width="1.1" stroke-linejoin="round"/>
</g>
<path d="M289.5 138.6 H301.6 V141.6 L295.55 149 L301.6 156.4 V159.4 H289.5 V156.4 L295.55 149 L289.5 141.6 Z" fill="#f0f0f0" stroke="#606060" stroke-width="1.3" stroke-linejoin="round"/>
<path d="M192.4 110 l4.2 4.2 l4.2 -4.2" fill="none" stroke="#4e4e4e" stroke-width="2.7"/>
<path d="M378.8 110 l4.2 4.2 l4.2 -4.2" fill="none" stroke="#4e4e4e" stroke-width="2.7"/>
<path d="M458.7 110 l4.2 4.2 l4.2 -4.2" fill="none" stroke="#4e4e4e" stroke-width="2.7"/>
</svg>
</body></html>
